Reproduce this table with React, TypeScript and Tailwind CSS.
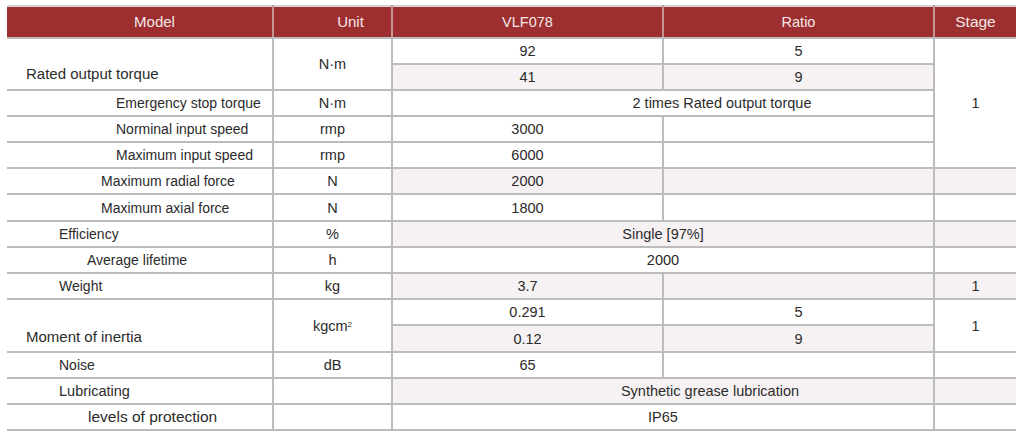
const base = "border-2 border-[#bcbcbc] h-[26px] p-0";
const cell = `${base} text-center align-middle`;
const shade = "bg-[#f6f2f3]";

type LabelProps = { text: string; pl: string; size?: string };

function Label({ text, pl, size = "text-[14px]" }: LabelProps) {
  return <td className={`${base} border-l-0 text-left align-middle ${pl} ${size}`}>{text}</td>;
}

export default function App() {
  return (
    <div className="min-h-screen bg-white pt-[5px] pl-[7px] font-['Liberation_Sans',Arial,sans-serif] text-[#2b2b2b]">
      <table className="w-[1009px] table-fixed border-collapse text-[14.5px] leading-[16px]">
        <colgroup>
          <col className="w-[266px]" />
          <col className="w-[119px]" />
          <col className="w-[271px]" />
          <col className="w-[271px]" />
          <col className="w-[82px]" />
        </colgroup>
        <thead>
          <tr className="bg-[#9d2f31] text-[#f6e7e7]">
            <th className="h-[32px] border-2 border-t-[#d4d4d4] border-l-0 border-[#c49595] border-b-[#bcbcbc] pl-[30px] text-[15px] font-normal">Model</th>
            <th className="border-2 border-t-[#d4d4d4] border-[#c49595] border-b-[#bcbcbc] pl-[36px] text-[15px] font-normal">Unit</th>
            <th className="border-2 border-t-[#d4d4d4] border-[#c49595] border-b-[#bcbcbc] font-normal">VLF078</th>
            <th className="border-2 border-t-[#d4d4d4] border-[#c49595] border-b-[#bcbcbc] font-normal">Ratio</th>
            <th className="border-2 border-t-[#d4d4d4] border-r-0 border-[#c49595] border-b-[#bcbcbc] text-[15.5px] font-normal">Stage</th>
          </tr>
        </thead>
        <tbody>
          <tr>
            <td rowSpan={2} className={`${base} border-l-0 pb-[7px] pl-[19px] text-left align-bottom text-[15px]`}>
              Rated output torque
            </td>
            <td rowSpan={2} className={cell}>N·m</td>
            <td className={cell}>92</td>
            <td className={cell}>5</td>
            <td rowSpan={5} className={`${cell} border-r-0`}>1</td>
          </tr>
          <tr>
            <td className={`${cell} ${shade}`}>41</td>
            <td className={`${cell} ${shade}`}>9</td>
          </tr>
          <tr>
            <Label text="Emergency stop torque" pl="pl-[109px]" />
            <td className={cell}>N·m</td>
            <td colSpan={2} className={`${cell} pl-[118px]`}>2 times Rated output torque</td>
          </tr>
          <tr>
            <Label text="Norminal input speed" pl="pl-[109px]" />
            <td className={cell}>rmp</td>
            <td className={cell}>3000</td>
            <td className={cell}></td>
          </tr>
          <tr>
            <Label text="Maximum input speed" pl="pl-[109px]" />
            <td className={cell}>rmp</td>
            <td className={cell}>6000</td>
            <td className={cell}></td>
          </tr>
          <tr>
            <Label text="Maximum radial force" pl="pl-[94px]" />
            <td className={cell}>N</td>
            <td className={`${cell} ${shade}`}>2000</td>
            <td className={`${cell} ${shade}`}></td>
            <td className={`${cell} ${shade} border-r-0`}></td>
          </tr>
          <tr className="h-[27px]">
            <Label text="Maximum axial force" pl="pl-[94px]" />
            <td className={cell}>N</td>
            <td className={cell}>1800</td>
            <td className={cell}></td>
            <td className={`${cell} border-r-0`}></td>
          </tr>
          <tr>
            <Label text="Efficiency" pl="pl-[52px]" />
            <td className={cell}>%</td>
            <td colSpan={2} className={`${cell} ${shade}`}>Single [97%]</td>
            <td className={`${cell} ${shade} border-r-0`}></td>
          </tr>
          <tr>
            <Label text="Average lifetime" pl="pl-[80px]" />
            <td className={cell}>h</td>
            <td colSpan={2} className={cell}>2000</td>
            <td className={`${cell} border-r-0`}></td>
          </tr>
          <tr>
            <Label text="Weight" pl="pl-[52px]" />
            <td className={cell}>kg</td>
            <td className={`${cell} ${shade}`}>3.7</td>
            <td className={`${cell} ${shade}`}></td>
            <td className={`${cell} ${shade} border-r-0`}>1</td>
          </tr>
          <tr>
            <td rowSpan={2} className={`${base} border-l-0 pb-[6px] pl-[19px] text-left align-bottom text-[15px]`}>
              Moment of inertia
            </td>
            <td rowSpan={2} className={cell}>
              kgcm<sup className="text-[8px]">2</sup>
            </td>
            <td className={cell}>0.291</td>
            <td className={cell}>5</td>
            <td rowSpan={2} className={`${cell} border-r-0`}>1</td>
          </tr>
          <tr className="h-[27px]">
            <td className={`${cell} ${shade}`}>0.12</td>
            <td className={`${cell} ${shade}`}>9</td>
          </tr>
          <tr>
            <Label text="Noise" pl="pl-[52px]" />
            <td className={cell}>dB</td>
            <td className={cell}>65</td>
            <td className={cell}></td>
            <td className={`${cell} border-r-0`}></td>
          </tr>
          <tr>
            <Label text="Lubricating" pl="pl-[52px]" size="text-[14.5px]" />
            <td className={cell}></td>
            <td colSpan={2} className={`${cell} ${shade} pl-[94px]`}>Synthetic grease lubrication</td>
            <td className={`${cell} ${shade} border-r-0`}></td>
          </tr>
          <tr>
            <Label text="levels of protection" pl="pl-[81px]" size="text-[15.5px]" />
            <td className={cell}></td>
            <td colSpan={2} className={cell}>IP65</td>
            <td className={`${cell} border-r-0`}></td>
          </tr>
        </tbody>
      </table>
    </div>
  );
}
